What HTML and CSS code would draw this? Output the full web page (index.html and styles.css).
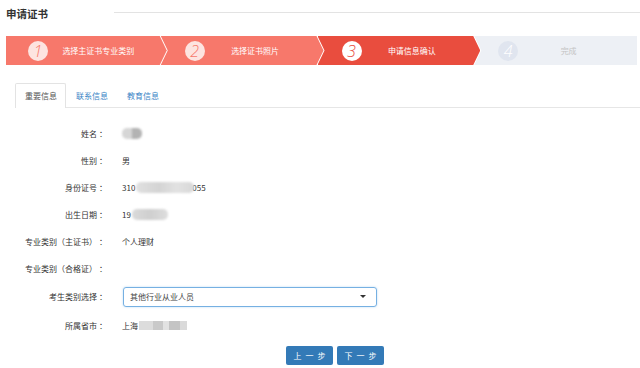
FILE: index.html
```html
<!DOCTYPE html>
<html lang="zh-CN">
<head>
    <meta charset="UTF-8">
    <title>申请证书</title>
    <link rel="stylesheet" href="styles.css">
</head>
<body>
    <div class="header">
        <h1>申请证书</h1>
        <div class="header-line"></div>
    </div>

    <div class="steps">
        <div class="step done first">
            <span class="step-num">1</span>
            <span class="step-text">选择主证书专业类别</span>
        </div>
        <div class="step done">
            <span class="step-num">2</span>
            <span class="step-text">选择证书照片</span>
        </div>
        <div class="step current">
            <span class="step-num">3</span>
            <span class="step-text">申请信息确认</span>
        </div>
        <div class="step todo last">
            <span class="step-num">4</span>
            <span class="step-text">完成</span>
        </div>
    </div>

    <div class="tabs">
        <div class="tab active">重要信息</div>
        <div class="tab">联系信息</div>
        <div class="tab">教育信息</div>
    </div>

    <div class="form">
        <div class="row">
            <div class="label">姓名<span class="colon">：</span></div>
            <div class="value"><span class="mask mask-name"></span></div>
        </div>
        <div class="row">
            <div class="label">性别<span class="colon">：</span></div>
            <div class="value">男</div>
        </div>
        <div class="row">
            <div class="label">身份证号<span class="colon">：</span></div>
            <div class="value">310<span class="mask mask-id"></span><span class="cut">055</span></div>
        </div>
        <div class="row">
            <div class="label">出生日期<span class="colon">：</span></div>
            <div class="value">19<span class="mask mask-date"></span></div>
        </div>
        <div class="row">
            <div class="label">专业类别（主证书）<span class="colon">：</span></div>
            <div class="value">个人理财</div>
        </div>
        <div class="row">
            <div class="label">专业类别（合格证）<span class="colon">：</span></div>
            <div class="value"></div>
        </div>
        <div class="row tall">
            <div class="label">考生类别选择<span class="colon">：</span></div>
            <div class="value">
                <div class="select">
                    <span>其他行业从业人员</span>
                    <span class="caret"></span>
                </div>
            </div>
        </div>
        <div class="row tall">
            <div class="label">所属省市<span class="colon">：</span></div>
            <div class="value">上海<span class="mask mask-city"></span></div>
        </div>
        <div class="actions">
            <button class="btn">上一步</button>
            <button class="btn">下一步</button>
        </div>
    </div>
</body>
</html>
```

FILE: styles.css
```css
* { margin: 0; padding: 0; box-sizing: border-box; }
body { font-family: "Noto Sans CJK SC", "Noto Sans", sans-serif; font-size: 8px; color: #333; background: #fff; text-spacing-trim: space-all; }

.header { display: flex; align-items: center; height: 26px; padding-left: 6px; }
.header h1 { font-size: 10.5px; font-weight: bold; color: #333; }
.header-line { flex: 1; height: 1px; background: #e3e3e3; margin-left: 66px; margin-top: -2px; }

.steps { display: flex; height: 29px; margin: 10px 3px 0 6px; }
.step { flex: 1; display: flex; align-items: center; padding: 0 18px 0 24px; margin-left: -6px;
        clip-path: polygon(0 0, calc(100% - 7px) 0, 100% 50%, calc(100% - 7px) 100%, 0 100%, 7px 50%); }
.step.first { margin-left: 0; padding-left: 22px; clip-path: polygon(0 0, calc(100% - 7px) 0, 100% 50%, calc(100% - 7px) 100%, 0 100%); }
.step.last { clip-path: polygon(0 0, 100% 0, 100% 100%, 0 100%, 7px 50%); }
.step-num { width: 20px; height: 20px; border-radius: 50%; display: flex; align-items: center; justify-content: center;
            font-family: "Open Sans", sans-serif; font-style: italic; font-weight: 300; font-size: 16px; }
.step-text { flex: 1; text-align: center; font-size: 8px; color: #fff; }
.step.done { background: #f7786b; }
.step.done .step-num { background: #fde4e0; color: #f7786b; }
.step.current { background: #e94d3e; }
.step.current .step-num { background: #fff; color: #e94d3e; }
.step.todo { background: #edf0f5; }
.step.todo .step-num { background: #e0e5ef; color: #fff; }
.step.todo .step-text { color: #c4c4c4; }

.tabs { display: flex; margin: 18px 0 0 15px; height: 25px; border-bottom: 1px solid #e6e6e6; }
.tab { height: 25px; line-height: 24px; padding: 0 8px 0 9px; color: #3a84c6; border: 1px solid transparent; border-bottom: none; }
.tab.active { color: #555; border-color: #e3e3e3; background: #fff; height: 25px; border-radius: 2px 2px 0 0; }

.form { padding: 12px 0 0 7px; }
.row { display: grid; grid-template-columns: 100px 1fr; column-gap: 15px; height: 27px; align-items: center; }
.row.tall { height: 29px; }
.label { text-align: right; white-space: nowrap; }
.colon { display: inline-block; width: 10px; text-align: right; }
.value { display: flex; align-items: center; }

.mask { display: inline-block; height: 11px; border-radius: 5px; filter: blur(1.2px); }
.mask-name { width: 20px; background: linear-gradient(90deg, #d6d6d6 50%, #b3b3b3 50%); }
.mask-id { width: 58px; margin-left: 1px; background: linear-gradient(90deg, #e0e0e0, #d4d4d4 40%, #e2e2e2 70%, #d8d8d8); }
.mask-date { width: 36px; margin-left: 1px; background: linear-gradient(90deg, #dadada, #cfcfcf 50%, #dedede); }
.mask-city { width: 48px; height: 9px; border-radius: 0; margin-left: 1px; filter: blur(0.6px);
             background: linear-gradient(90deg, #dcdcdc 0 30%, #c9c9c9 30% 50%, #e2e2e2 50% 62%, #c4c4c4 62% 85%, #dadada 85%); }
.cut { margin-left: -2px; }

.select { width: 254px; height: 20px; margin-left: 1px; border: 1px solid #76b0e2; border-radius: 3px;
          box-shadow: 0 0 2px rgba(102, 175, 233, 0.5); display: flex; align-items: center;
          justify-content: space-between; padding: 0 10px 0 6px; color: #444; }
.caret { width: 0; height: 0; border-left: 3px solid transparent; border-right: 3px solid transparent; border-top: 3px solid #333; }

.actions { display: flex; gap: 4px; padding-left: 279px; margin-top: 6px; }
.btn { width: 47px; height: 19px; background: #337ab7; color: #fff; border: none; border-radius: 2px;
       font-family: "Noto Sans CJK SC", sans-serif; font-size: 8px; letter-spacing: 4px; text-indent: 4px; cursor: pointer; }
```
